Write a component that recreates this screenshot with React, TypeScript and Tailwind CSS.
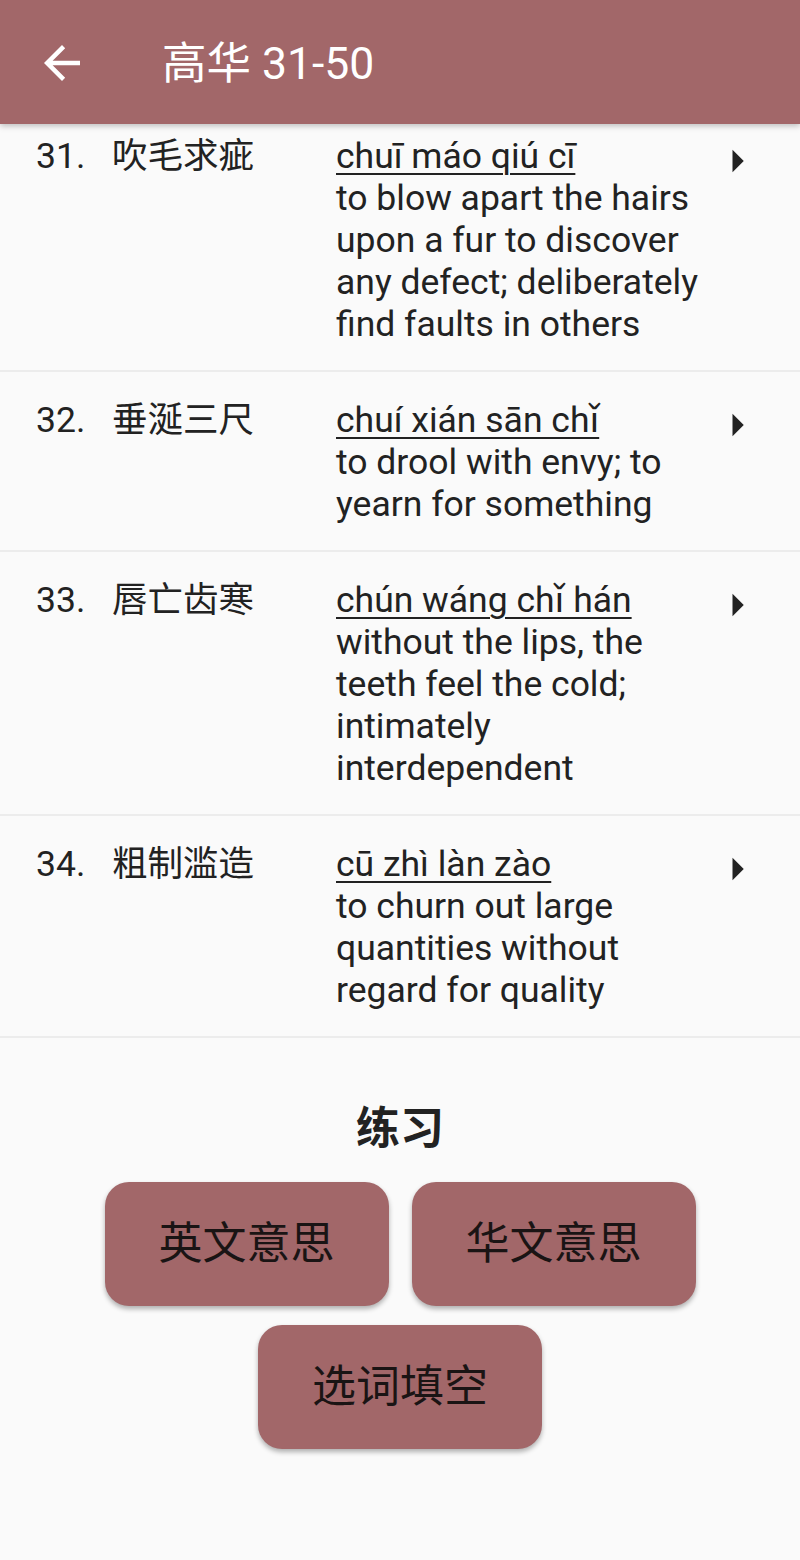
import React from "react";

const rows = [
  {
    n: "31.",
    zh: "吹毛求疵",
    py: "chuī máo qiú cī",
    en: "to blow apart the hairs upon a fur to discover any defect; deliberately find faults in others",
  },
  {
    n: "32.",
    zh: "垂涎三尺",
    py: "chuí xián sān chǐ",
    en: "to drool with envy; to yearn for something",
  },
  {
    n: "33.",
    zh: "唇亡齿寒",
    py: "chún wáng chǐ hán",
    en: "without the lips, the teeth feel the cold; intimately interdependent",
  },
  {
    n: "34.",
    zh: "粗制滥造",
    py: "cū zhì làn zào",
    en: "to churn out large quantities without regard for quality",
  },
];

const font = { fontFamily: 'Roboto, "Noto Sans CJK SC", sans-serif' };

export default function App() {
  return (
    <div
      className="w-[800px] h-[1560px] bg-[#fafafa] text-[#222222] overflow-hidden flex flex-col"
      style={font}
    >
      <header className="relative z-10 h-[124px] bg-[#a26769] flex items-center shadow-[0_2px_6px_rgba(0,0,0,0.25)] shrink-0">
        <div className="w-[54px] h-[54px] ml-[35px] mt-[1px]">
          <svg viewBox="0 0 24 24" width="54" height="54" fill="#ffffff">
            <path d="M20 11H7.83l5.59-5.59L12 4l-8 8 8 8 1.41-1.41L7.83 13H20v-2z" />
          </svg>
        </div>
        <div className="ml-[73px] text-white text-[44.5px] leading-[52px] mt-[4px]">高华 31-50</div>
      </header>

      <div className="flex flex-col">
        {rows.map((r, i) => (
          <div
            key={r.n}
            className={`flex border-b-2 border-[#ececec] pb-[25px] ${i === 0 ? "pt-[11px]" : "pt-[27px]"}`}
          >
            <div className="w-[112px] pl-[36px] text-[35.5px] leading-[42px] shrink-0">{r.n}</div>
            <div className="w-[224px] text-[35.5px] leading-[42px] shrink-0">{r.zh}</div>
            <div className="w-[374px] text-[35.5px] leading-[42px] shrink-0">
              <div className="underline decoration-[2px] underline-offset-[5px]">{r.py}</div>
              <div>{r.en}</div>
            </div>
            <div className="w-[54px] h-[54px] shrink-0 -mt-[1px]">
              <svg viewBox="0 0 24 24" width="54" height="54" fill="#222222">
                <path d="M10 17l5-5-5-5v10z" />
              </svg>
            </div>
          </div>
        ))}
      </div>

      <div className="flex flex-col items-center pt-[65px]">
        <div className="text-[44px] leading-[52px] font-bold">练习</div>
        <div className="mt-[27px] w-[620px] flex flex-wrap justify-center gap-x-[23px] gap-y-[19px]">
          {["英文意思", "华文意思", "选词填空"].map((t) => (
            <div
              key={t}
              className="w-[284px] h-[124px] rounded-[24px] bg-[#a26769] flex items-center justify-center text-[44px] text-[#1a1414] shadow-[0_3px_5px_rgba(0,0,0,0.3)]"
            >
              {t}
            </div>
          ))}
        </div>
      </div>
    </div>
  );
}
